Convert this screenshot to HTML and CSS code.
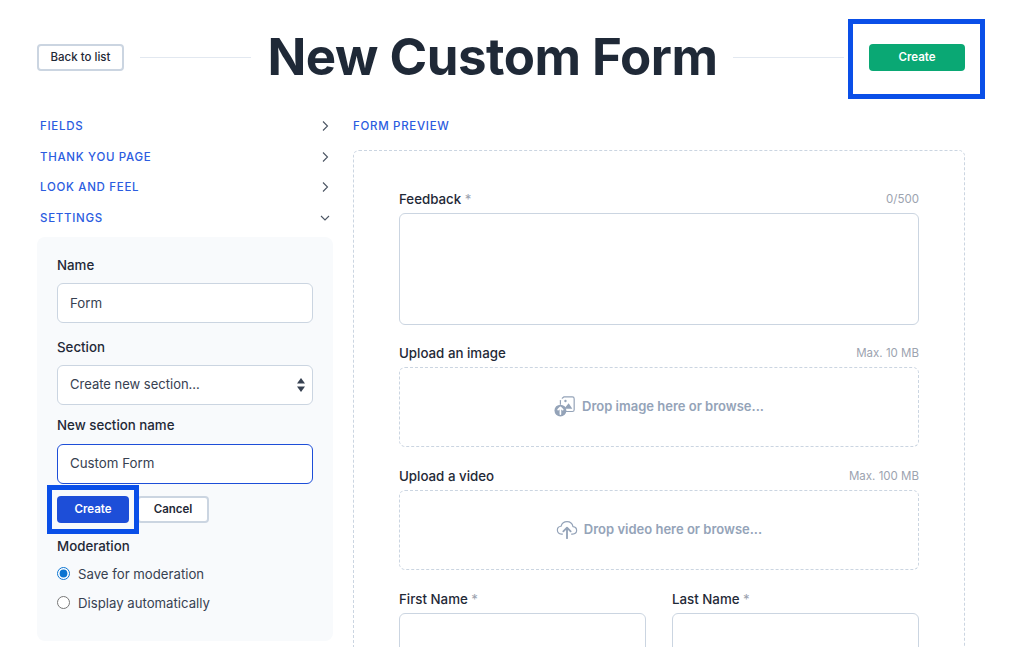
FILE: index.html
```html
<!DOCTYPE html>
<html lang="en">

<head>
    <meta charset="UTF-8">
    <meta name="viewport" content="width=device-width, initial-scale=1.0">
    <title>New Custom Form</title>
    <link rel="stylesheet" href="styles.css">
</head>

<body>
    <div class="page">
        <header class="top">
            <a class="btn btn-line back" href="#">Back to list</a>
            <span class="rule"></span>
            <h1>New Custom Form</h1>
            <span class="rule"></span>
            <div class="top-action">
                <button class="btn btn-green" type="button">Create</button>
                <span class="mark mark-top"></span>
            </div>
        </header>

        <div class="columns">
            <aside class="side">
                <div class="acc-row">
                    <span>Fields</span>
                    <svg class="chev" viewBox="0 0 10 12"><path d="M3 1.5 7.5 6 3 10.500"/></svg>
                </div>
                <div class="acc-row">
                    <span>Thank you page</span>
                    <svg class="chev" viewBox="0 0 10 12"><path d="M3 1.5 7.5 6 3 10.500"/></svg>
                </div>
                <div class="acc-row">
                    <span>Look and feel</span>
                    <svg class="chev" viewBox="0 0 10 12"><path d="M3 1.5 7.5 6 3 10.500"/></svg>
                </div>
                <div class="acc-row">
                    <span>Settings</span>
                    <svg class="chev" viewBox="0 0 10 12"><path d="M1 4 5 8 9 4"/></svg>
                </div>

                <form class="panel">
                    <label class="lbl" for="name">Name</label>
                    <input class="field" id="name" type="text" value="Form">

                    <label class="lbl" for="section">Section</label>
                    <div class="select-wrap">
                        <select class="field field-select" id="section">
                            <option>Create new section...</option>
                        </select>
                        <svg class="updown" viewBox="0 0 8 14"><path d="M4 0 8 5.500H0Z"/><path d="M4 14 0 8.500H8Z"/></svg>
                    </div>

                    <label class="lbl lbl-tight" for="newsection">New section name</label>
                    <input class="field field-focus" id="newsection" type="text" value="Custom Form">

                    <div class="btn-row">
                        <div class="create-wrap">
                            <button class="btn btn-blue" type="button">Create</button>
                            <span class="mark mark-side"></span>
                        </div>
                        <button class="btn btn-line btn-cancel" type="button">Cancel</button>
                    </div>

                    <div class="lbl lbl-mod">Moderation</div>
                    <label class="radio"><input type="radio" name="mod" checked> Save for moderation</label>
                    <label class="radio"><input type="radio" name="mod"> Display automatically</label>
                </form>
            </aside>

            <main class="preview">
                <h2>Form preview</h2>
                <div class="sheet">
                    <div class="row-head">
                        <span class="name">Feedback <i>*</i></span>
                        <span class="hint">0/500</span>
                    </div>
                    <div class="box box-area"></div>

                    <div class="row-head">
                        <span class="name">Upload an image</span>
                        <span class="hint">Max. 10 MB</span>
                    </div>
                    <div class="drop">
                        <svg class="drop-icon" viewBox="0 0 24 24">
                            <path class="thin" d="M9 3.500 11 2H20Q22 2 22 4V16Q22 18 20 18H13"/>
                            <path class="thin" d="M7 10V6"/>
                            <circle class="fill" cx="12.500" cy="6.500" r="1.300"/>
                            <path class="fill" d="M11 15 16 9 20 15Z"/>
                            <circle class="fill" cx="7" cy="17" r="6.500"/>
                            <path class="cut" d="M7 21V14M4.500 16 7 13.500 9.500 16"/>
                        </svg>
                        Drop image here or browse...
                    </div>

                    <div class="row-head">
                        <span class="name">Upload a video</span>
                        <span class="hint">Max. 100 MB</span>
                    </div>
                    <div class="drop">
                        <svg class="drop-icon" viewBox="0 0 24 24">
                            <path class="thin" d="M7 17.500H6Q1.500 17 1.500 13 1.500 9.500 5.500 9 7 4 12 4 17.500 4 18.500 9.500 22.500 10 22.500 13.500 22.500 17 18 17.500H17"/>
                            <path class="thick" d="M12 22V11M8 14.500 12 10.500 16 14.500"/>
                        </svg>
                        Drop video here or browse...
                    </div>

                    <div class="two">
                        <div>
                            <div class="row-head"><span class="name">First Name <i>*</i></span></div>
                            <div class="box box-input"></div>
                        </div>
                        <div>
                            <div class="row-head"><span class="name">Last Name <i>*</i></span></div>
                            <div class="box box-input"></div>
                        </div>
                    </div>
                </div>
            </main>
        </div>
    </div>
</body>

</html>
```

FILE: styles.css
```css
* {
    margin: 0;
    padding: 0;
    box-sizing: border-box;
}

html,
body {
    height: 100%;
    overflow: hidden;
}

body {
    background: #fff;
    color: #1f2937;
    font-family: "Inter", "Liberation Sans", sans-serif;
    font-size: 13.300px;
}

.page {
    padding: 19px 56px 0 37px;
}

/* header */
.top {
    display: flex;
    align-items: center;
    height: 80px;
    padding-bottom: 3px;
}

.top h1 {
    margin: 0 15px 3px 16px;
    font-size: 51px;
    font-weight: 700;
    letter-spacing: -0.5px;
    color: #1f2937;
    white-space: nowrap;
}

.rule {
    flex: 1;
    height: 1px;
    margin-bottom: 1px;
    background: #e2e8f0;
}

.back {
    margin-right: 16px;
}

.top-action {
    position: relative;
    margin-left: 25px;
}

.btn {
    display: inline-flex;
    align-items: center;
    justify-content: center;
    height: 27px;
    padding-bottom: 2px;
    border: 0;
    border-radius: 4px;
    font-family: inherit;
    font-size: 11.500px;
    font-weight: 600;
    text-decoration: none;
    cursor: pointer;
}

.btn-line {
    width: 87px;
    background: #fff;
    border: 2px solid #cbd5e1;
    color: #1f2937;
    font-weight: 500;
}

.btn-cancel {
    width: 72px;
    font-weight: 600;
}

.btn-green {
    width: 96px;
    background: #0aa874;
    color: #fff;
}

.btn-blue {
    width: 72px;
    background: #1d4ed8;
    color: #fff;
}

/* annotation frames drawn over the page */
.mark {
    position: absolute;
    border: 5px solid #0a4fe8;
    pointer-events: none;
}

.mark-top {
    top: -25px;
    right: -20px;
    bottom: -28px;
    left: -21px;
}

.mark-side {
    top: -11px;
    right: -10px;
    bottom: -11px;
    left: -10px;
}

/* columns */
.columns {
    display: flex;
    gap: 20px;
    margin-top: 12px;
}

.side {
    width: 296px;
    flex: none;
}

.acc-row {
    display: flex;
    align-items: center;
    justify-content: space-between;
    height: 30.500px;
    padding: 0 3px;
    font-size: 11.500px;
    font-weight: 500;
    letter-spacing: 0.7px;
    text-transform: uppercase;
    color: #2b5ce0;
}

.chev {
    width: 10px;
    height: 12px;
    fill: none;
    stroke: #4b5563;
    stroke-width: 1.100;
}

.panel {
    margin-top: 4px;
    padding: 19px 20px;
    height: 404px;
    background: #f8fafc;
    border-radius: 8px;
}

.lbl {
    display: block;
    margin-bottom: 9px;
    font-size: 13.300px;
    line-height: 18px;
    font-weight: 500;
    color: #1f2937;
}

.field {
    display: block;
    width: 100%;
    height: 40px;
    margin-bottom: 15px;
    padding: 0 12px 1px;
    background: #fff;
    border: 1px solid #cbd5e1;
    border-radius: 6px;
    font-family: inherit;
    font-size: 13.300px;
    color: #374151;
    outline: 0;
    appearance: none;
}

.field-select {
    padding-bottom: 3px;
    font-size: 13px;
}

.field-focus {
    margin-bottom: 12px;
    padding-bottom: 3px;
    border-color: #1d4ed8;
}

.lbl-tight {
    margin-top: -4px;
    margin-bottom: 10px;
}

.select-wrap {
    position: relative;
}

.updown {
    position: absolute;
    top: 13px;
    right: 8px;
    width: 8px;
    height: 14px;
    fill: #374151;
}

.btn-row {
    display: flex;
    gap: 8px;
}

.create-wrap {
    position: relative;
    height: 27px;
}

.lbl-mod {
    margin-top: 14px;
    margin-bottom: 4px;
}

.radio {
    display: flex;
    align-items: center;
    gap: 8px;
    height: 29px;
    font-size: 13.200px;
    color: #374151;
}

.radio input {
    width: 13px;
    height: 13px;
    accent-color: #0b74d1;
}

/* preview */
.preview {
    flex: 1;
}

.preview h2 {
    height: 30.500px;
    line-height: 30.500px;
    font-size: 11.500px;
    font-weight: 500;
    letter-spacing: 0.7px;
    text-transform: uppercase;
    color: #2b5ce0;
}

.sheet {
    height: 560px;
    margin-top: 8px;
    padding: 36px 45px;
    border: 1px dashed #cbd5e1;
    border-radius: 6px;
}

.row-head {
    display: flex;
    align-items: center;
    justify-content: space-between;
    height: 26px;
    padding-bottom: 1px;
}

.name {
    font-size: 13.300px;
    font-weight: 500;
    color: #1f2937;
}

.name i {
    font-style: normal;
    font-weight: 400;
    color: #9ca3af;
}

.hint {
    font-size: 11.500px;
    color: #9ca3af;
}

.box {
    border: 1px solid #cbd5e1;
    border-radius: 6px;
}

.box-area {
    height: 112px;
    margin-bottom: 16px;
}

.box-input {
    height: 60px;
}

.drop {
    display: flex;
    align-items: center;
    justify-content: center;
    gap: 6px;
    height: 80px;
    margin-bottom: 17px;
    padding-bottom: 2px;
    border: 1px dashed #cbd5e1;
    border-radius: 6px;
    font-size: 13px;
    font-weight: 600;
    color: #94a3b8;
}

.drop-icon {
    width: 22px;
    height: 22px;
}

.thin,
.thick,
.cut {
    fill: none;
    stroke-linecap: round;
    stroke-linejoin: round;
}

.thin {
    stroke: #94a3b8;
    stroke-width: 1.300;
}

.thick {
    stroke: #94a3b8;
    stroke-width: 2;
}

.fill {
    fill: #94a3b8;
}

.cut {
    stroke: #fff;
    stroke-width: 1.800;
}

.two {
    display: grid;
    grid-template-columns: 247px 247px;
    justify-content: space-between;
}
```
